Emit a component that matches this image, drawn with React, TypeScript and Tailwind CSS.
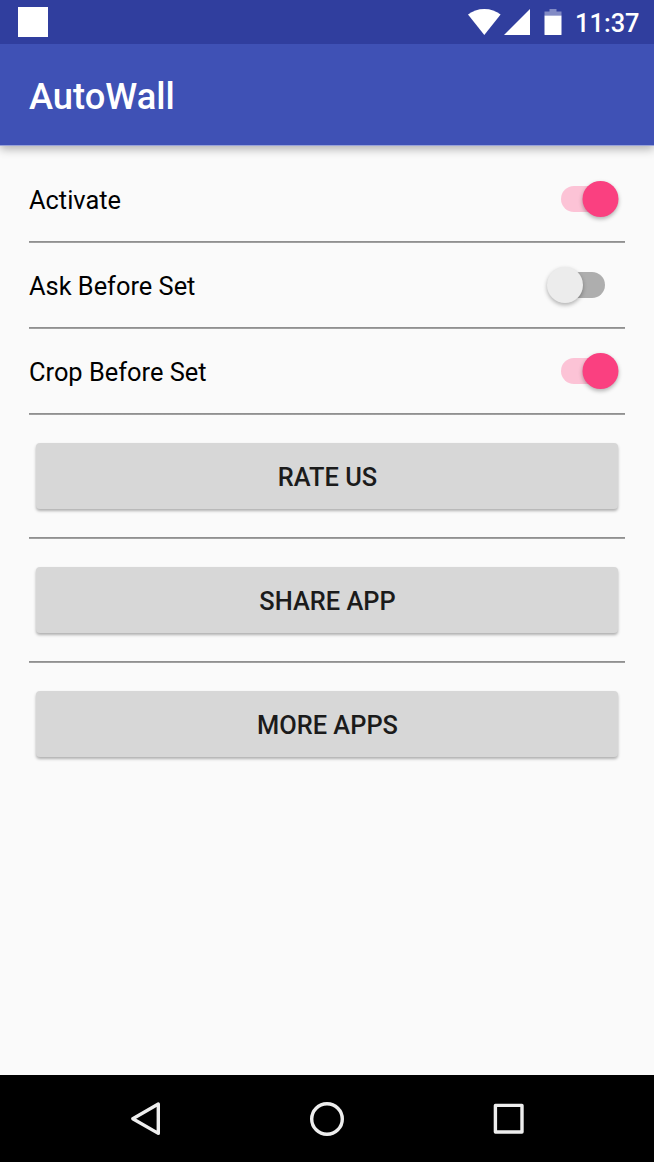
import { useState } from "react";

const INITIAL_SETTINGS = [
  { label: "Activate", on: true },
  { label: "Ask Before Set", on: false },
  { label: "Crop Before Set", on: true },
];

const ACTIONS = ["Rate us", "Share app", "More apps"];

function Divider() {
  return <div className="h-0.5 bg-linear-to-b from-[#888888] to-[#a8a8a8]" />;
}

function StatusBar() {
  return (
    <div className="z-20 flex h-[44px] items-center justify-between bg-[#303e9e] pr-[14.5px] pl-[17.5px]">
      <div className="size-[30px] bg-white" />
      <div className="flex items-center">
        <svg width="33" height="26" viewBox="0 0 33 26" fill="#fff">
          <path d="M16.3 26 0 5.6C4.5 2 10 0 16.3 0s11.8 2 16.3 5.6z" />
        </svg>
        <svg className="ml-[3px]" width="26" height="26" viewBox="0 0 26 26" fill="#fff">
          <path d="M26 0v26H0z" />
        </svg>
        <svg className="ml-[14px]" width="18" height="26" viewBox="0 0 18 26" fill="#fff">
          <path d="M0.5 2.6h5V0h7v2.6h5v4H0.5z" opacity="0.4" />
          <path d="M0.5 6.6h17V25.4a0.6 0.6 0 0 1-0.6 0.6H1.1a0.6 0.6 0 0 1-0.6-0.6z" />
        </svg>
        <span className="ml-[13px] pt-[3px] text-[25.4px] leading-none font-medium text-white">11:37</span>
      </div>
    </div>
  );
}

function Switch({ on, label, onToggle }: { on: boolean; label: string; onToggle: () => void }) {
  return (
    <button
      role="switch"
      aria-checked={on}
      aria-label={label}
      onClick={onToggle}
      className={`mr-5 flex h-[26px] w-11 items-center rounded-full ${on ? "bg-[#fcc3d6]" : "bg-[#aeaeae]"}`}
    >
      <span
        className={`size-[36px] shrink-0 rounded-full shadow-[0_2px_4px_rgba(0,0,0,0.3)] ${
          on ? "translate-x-[21.5px] bg-[#fa4080]" : "-translate-x-[14px] bg-[#ececec]"
        }`}
      />
    </button>
  );
}

function NavBar() {
  return (
    <div className="flex h-[87px] items-center justify-between bg-black pr-[129px] pl-[129px]">
      <svg width="32" height="36" viewBox="0 0 32 36" fill="none" stroke="#eee" strokeWidth="3.4" strokeLinejoin="round">
        <path d="M29.3 3v29.4L3.8 17.7z" />
      </svg>
      <svg width="36" height="36" viewBox="0 0 36 36" fill="none" stroke="#eee" strokeWidth="3.4">
        <circle cx="18" cy="18" r="15.3" />
      </svg>
      <svg width="32" height="32" viewBox="0 0 32 32" fill="none" stroke="#eee" strokeWidth="3.4" strokeLinejoin="round">
        <path d="M2.4 2.4h26.6v26.6H2.4z" />
      </svg>
    </div>
  );
}

export default function App() {
  const [settings, setSettings] = useState(INITIAL_SETTINGS);

  function toggle(index: number) {
    setSettings((prev) => prev.map((s, i) => (i === index ? { ...s, on: !s.on } : s)));
  }

  return (
    <div className="flex h-[1162px] w-[654px] flex-col bg-[#fafafa] font-['Roboto',sans-serif]">
      <StatusBar />
      <header className="z-10 flex h-[102px] items-center border-b border-[#98a2d8] bg-[#3f51b5] pt-[5px] pl-[29px] shadow-[0_3px_9px_rgba(0,0,0,0.3)]">
        <h1 className="text-[36.3px] font-medium text-white">AutoWall</h1>
      </header>

      <main className="flex-1 px-[29px] pt-[11px]">
        {settings.map((setting, i) => (
          <div key={setting.label}>
            <div className="flex h-[84px] items-center justify-between">
              <span className="pt-[2px] text-[25.4px] text-black">{setting.label}</span>
              <Switch on={setting.on} label={setting.label} onToggle={() => toggle(i)} />
            </div>
            <Divider />
          </div>
        ))}
        {ACTIONS.map((action, i) => (
          <div key={action}>
            {i > 0 && <Divider />}
            <div className="flex h-[122px] items-center px-[7px]">
              <button className="h-[66px] flex-1 rounded-[4px] bg-[#d7d7d7] pt-[2px] pl-px text-[25.4px] font-medium text-[#1b1b1b] uppercase shadow-[0_2px_3px_rgba(0,0,0,0.3)]">
                {action}
              </button>
            </div>
          </div>
        ))}
      </main>

      <NavBar />
    </div>
  );
}
